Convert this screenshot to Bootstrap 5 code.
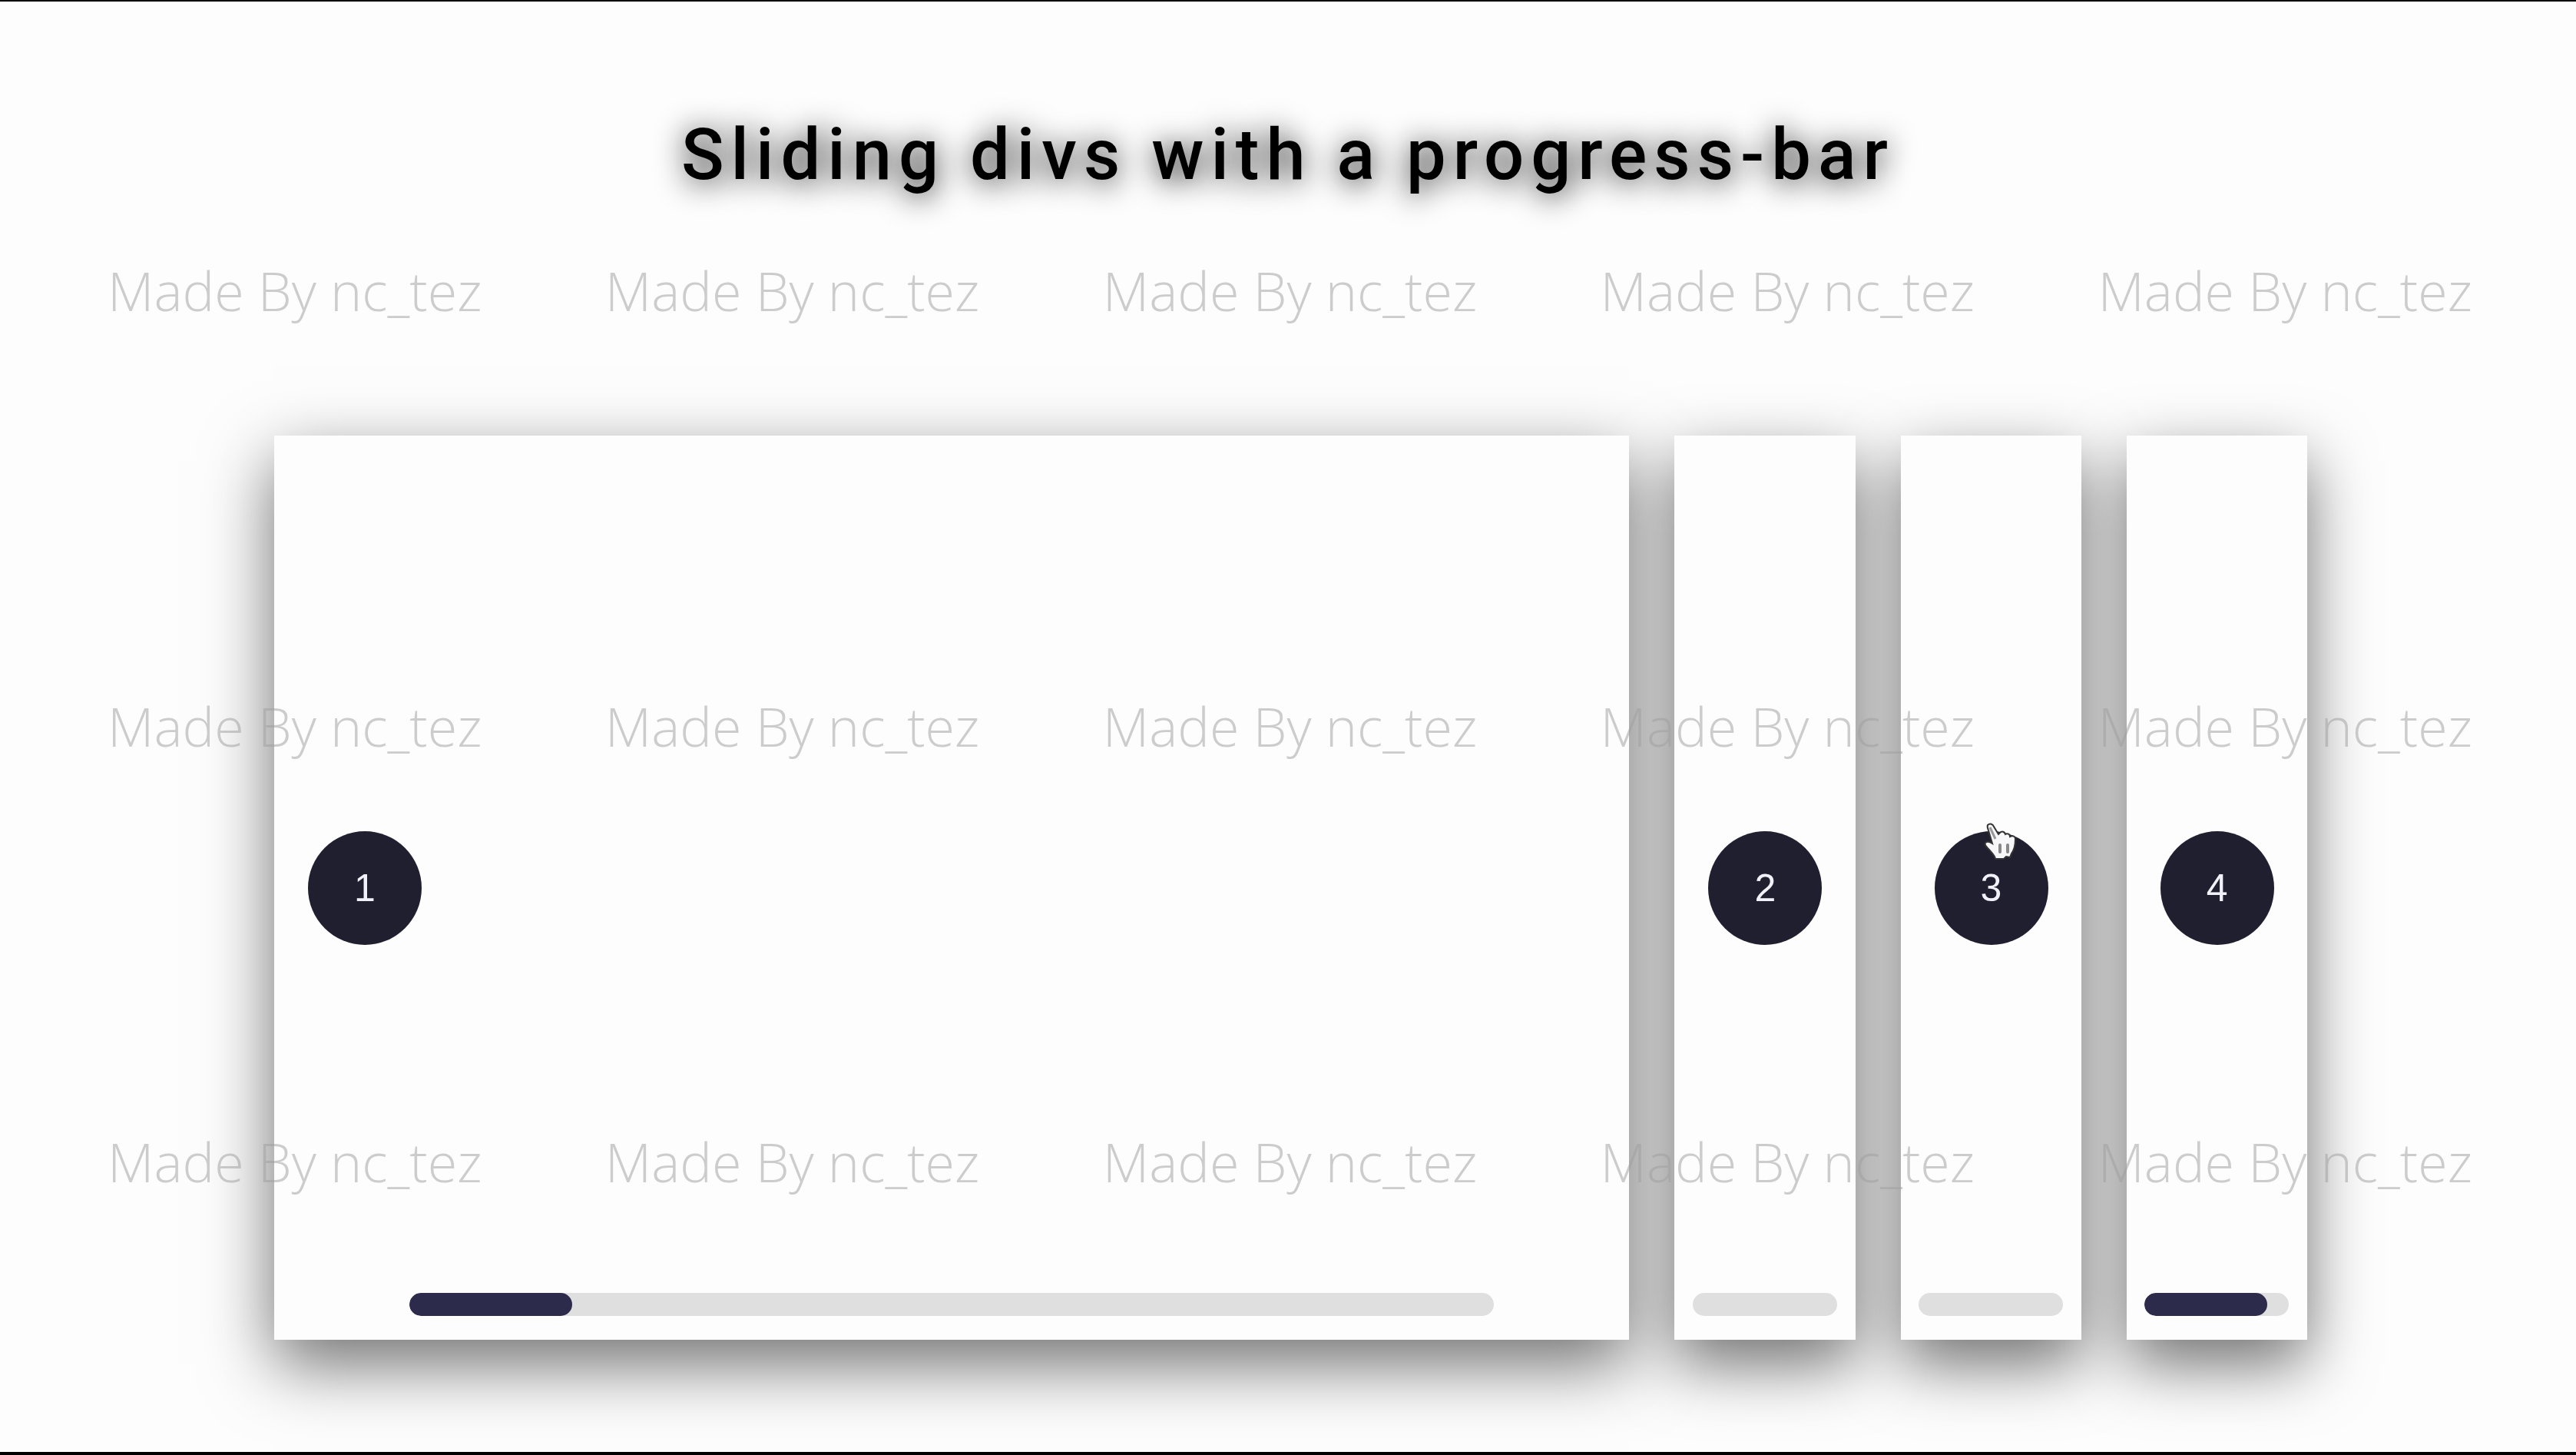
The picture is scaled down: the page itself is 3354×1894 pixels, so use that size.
<!DOCTYPE html>
<html lang="en">
<head>
<meta charset="utf-8">
<meta name="viewport" content="width=device-width, initial-scale=1">
<title>Sliding divs with a progress-bar</title>
<link rel="stylesheet" href="https://cdn.jsdelivr.net/npm/bootstrap@5.3.0/dist/css/bootstrap.min.css">
<style>
  body { background: #fdfdfd; }
  .page { border-top: 2px solid #000; border-bottom: 4px solid #000; padding-bottom: 146px; isolation: isolate; }
  .page-title {
    padding-top: 142px; margin-bottom: 308px; color: #000;
    font: 500 92px/115px Roboto, "Liberation Sans", sans-serif; letter-spacing: 9px;
    text-shadow: 0 4px 38px rgba(0, 0, 0, .95);
  }
  .stage { gap: 59px; padding: 0 350px 0 357px; }
  .panel { display: grid; grid-template-rows: 1fr auto 1fr; flex: 2 0 0; background: #fdfdfd; }
  .panel.open { flex-grow: 15; }
  .panel::before { content: ""; position: absolute; inset: 0; z-index: -1; box-shadow: 0 32px 84px rgba(0, 0, 0, .56); }
  .dot {
    grid-row: 2; width: 148px; height: 148px; margin-left: 44px; background: #201f30; color: #f1f1fa;
    font: 50px/50px "Liberation Sans", sans-serif;
  }
  .track { grid-row: 3; align-self: end; width: 80%; height: 30px; margin: 0 auto 31px; border-radius: 15px; background: #dfdfdf; }
  .track .progress-bar { background: #2c2b4b; border-radius: 15px; }
  .marks { padding: 328px 135px 330px 140px; color: rgba(160, 160, 160, .52); font: 300 70px/96px "Open Sans", sans-serif; z-index: 3; }
  .pointer { left: 62px; top: -13px; width: 46px; z-index: 4; }
</style>
</head>
<body>
<main class="page position-relative min-vh-100 d-flex flex-column">
  <h1 class="page-title text-center">Sliding divs with a progress-bar</h1>
  <section class="stage d-flex flex-grow-1">
    <div class="panel open position-relative">
      <button class="dot btn rounded-circle p-0 border-0" type="button">1</button>
      <div class="progress track" role="progressbar" aria-label="Panel 1" aria-valuenow="15" aria-valuemin="0" aria-valuemax="100"><div class="progress-bar" style="width:15%"></div></div>
    </div>
    <div class="panel position-relative">
      <button class="dot btn rounded-circle p-0 border-0" type="button">2</button>
      <div class="progress track" role="progressbar" aria-label="Panel 2" aria-valuenow="0" aria-valuemin="0" aria-valuemax="100"><div class="progress-bar" style="width:0%"></div></div>
    </div>
    <div class="panel position-relative">
      <button class="dot btn rounded-circle p-0 border-0 position-relative" type="button">3
        <svg class="pointer position-absolute" viewBox="0 0 46 52" aria-hidden="true"><path d="M7 5c3-3 7-1 8 2l6 10 3-3c3-1 5 0 6 3 3-2 6 0 6 3 4-2 7 0 7 3 0 8-2 15-5 19l-2 5-5-1-3 3H17c-1-5-5-8-8-12-3-3-7-6-5-9 2-2 6-1 9 1L8 12C7 9 6 7 7 5Z" fill="#f7f7fa" stroke="#333" stroke-width="2"/><path d="M10 8l7 15" stroke="#999" stroke-width="3"/><path d="M23 31v9M33 31v9" stroke="#888" stroke-width="4" stroke-linecap="round"/></svg>
      </button>
      <div class="progress track" role="progressbar" aria-label="Panel 3" aria-valuenow="0" aria-valuemin="0" aria-valuemax="100"><div class="progress-bar" style="width:0%"></div></div>
    </div>
    <div class="panel position-relative">
      <button class="dot btn rounded-circle p-0 border-0" type="button">4</button>
      <div class="progress track" role="progressbar" aria-label="Panel 4" aria-valuenow="85" aria-valuemin="0" aria-valuemax="100"><div class="progress-bar" style="width:85%"></div></div>
    </div>
  </section>
  <div class="marks position-absolute top-0 start-0 w-100 h-100 d-flex flex-column justify-content-between pe-none">
    <div class="d-flex justify-content-between"><span>Made By nc_tez</span><span>Made By nc_tez</span><span>Made By nc_tez</span><span>Made By nc_tez</span><span>Made By nc_tez</span></div>
    <div class="d-flex justify-content-between"><span>Made By nc_tez</span><span>Made By nc_tez</span><span>Made By nc_tez</span><span>Made By nc_tez</span><span>Made By nc_tez</span></div>
    <div class="d-flex justify-content-between"><span>Made By nc_tez</span><span>Made By nc_tez</span><span>Made By nc_tez</span><span>Made By nc_tez</span><span>Made By nc_tez</span></div>
  </div>
</main>
<script src="https://cdn.jsdelivr.net/npm/bootstrap@5.3.0/dist/js/bootstrap.bundle.min.js"></script>
</body>
</html>
